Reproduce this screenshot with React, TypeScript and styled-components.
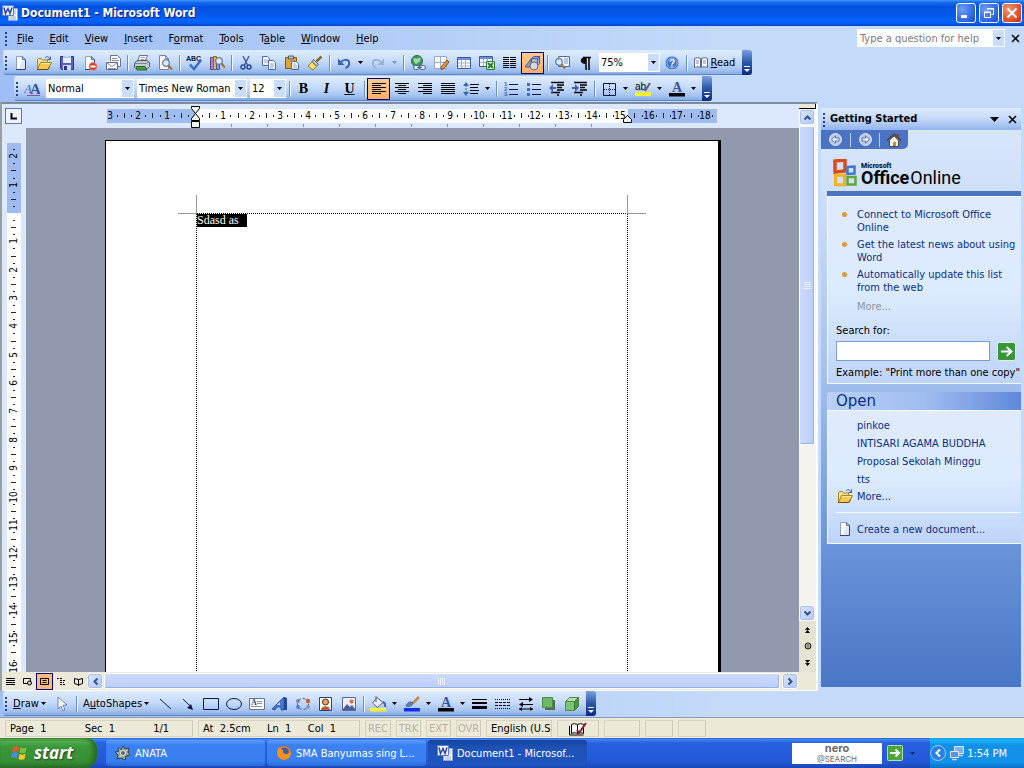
import React from 'react';
import styled, { createGlobalStyle, css } from 'styled-components';

const UI = '"DejaVu Sans Condensed", "Noto Sans", sans-serif';
const NAVY = '#0a2f86';

const Global = createGlobalStyle`
  * { box-sizing: border-box; }
  html, body { margin: 0; padding: 0; }
  body { font: 11px/13px ${UI}; color: #000; background: #c3daf9; }
  button, input, select { font: inherit; color: inherit; margin: 0; padding: 0; border: 0; background: none; border-radius: 0; }
  a { color: inherit; text-decoration: none; }
  svg { display: block; flex: none; }
`;

/* ---------- shell ---------- */
const Shell = styled.div`
  display: flex;
  flex-direction: column;
  height: 100vh;
  min-height: 480px;
  overflow: hidden;
  background: linear-gradient(90deg, #9ebef5 0, #c3daf9 70%);
`;
const TitleBar = styled.header`
  display: flex;
  align-items: center;
  flex: none;
  height: 26px;
  padding: 0 2px 0 2px;
  gap: 3px;
  background: linear-gradient(#3d95ff 0, #1668f0 10%, #0353e0 25%, #0458ea 60%, #0566ff 80%, #0558ee 92%, #0340c0 100%);
`;
const Title = styled.h1`
  flex: 1;
  margin: 0;
  font: bold 12px/16px ${UI};
  color: #fff;
  text-shadow: 1px 1px #0a1883;
`;
const WinButton = styled.button<{ $close?: boolean }>`
  display: flex;
  align-items: center;
  justify-content: center;
  width: 20px;
  height: 20px;
  border: 1px solid #fff;
  border-radius: 3px;
  background: ${p => p.$close
    ? 'radial-gradient(circle at 30% 30%, #f0936f, #dc4a22 70%, #b83012)'
    : 'radial-gradient(circle at 30% 30%, #6d9cf5, #2a62e4 70%, #1c48c0)'};
`;
const MenuBar = styled.nav`
  display: flex;
  align-items: center;
  flex: none;
  height: 24px;
  padding: 0 1px 0 3px;
`;
const MenuButton = styled.button`
  height: 20px;
  padding: 0 8px;
`;
const Spacer = styled.div` flex: 1; `;
const HelpBox = styled.div`
  display: flex;
  width: 148px;
  height: 18px;
  margin-right: 2px;
  background: #fff;
  input { flex: 1; min-width: 0; padding: 0 3px; outline: 0; }
  input::placeholder { color: #7b7b7b; opacity: 1; }
`;
const DropCap = styled.span`
  display: flex;
  align-items: center;
  justify-content: center;
  width: 11px;
  margin: 1px;
  background: #c9ddfa;
`;
const PlainButton = styled.button<{ $w?: number }>`
  display: flex;
  align-items: center;
  justify-content: center;
  flex: none;
  width: ${p => p.$w ?? 16}px;
  height: 16px;
`;

/* ---------- toolbars ---------- */
const BarRow = styled.div<{ $indent?: number }>`
  display: flex;
  flex: none;
  height: 26px;
  padding: 0 0 1px ${p => p.$indent ?? 3}px;
`;
const Bar = styled.div`
  display: flex;
  align-items: center;
  height: 25px;
  border-radius: 3px;
  background: linear-gradient(#dfecff 0, #c6dbfb 45%, #a3c2f1 80%, #86abe3 95%, #4a70ae 100%);
`;
const Grip = styled.span`
  flex: none;
  width: 6px;
  height: 15px;
  background: radial-gradient(circle, #27418c 1px, transparent 1px) 1px 0 / 4px 4px repeat-y;
`;
const ToolButton = styled.button<{ $on?: boolean; $w?: number }>`
  display: flex;
  align-items: center;
  justify-content: center;
  flex: none;
  gap: 2px;
  width: ${p => p.$w ?? 23}px;
  height: 22px;
  ${p => p.$on && css`border: 1px solid #000080; background: linear-gradient(#fecb93, #fdae66);`}
`;
const DropButton = styled(ToolButton)` width: 11px; `;
const Sep = styled.span`
  flex: none;
  width: 1px;
  height: 16px;
  margin: 0 2px 0 3px;
  background: #6a8ccb;
  box-shadow: 1px 0 #f1f9ff;
`;
const EndCap = styled.button`
  display: flex;
  align-items: flex-end;
  justify-content: center;
  width: 10px;
  height: 25px;
  margin-left: 3px;
  padding-bottom: 2px;
  border-radius: 0 3px 3px 0;
  background: linear-gradient(#7ba1e0, #2c56a8 50%, #0a2c80);
`;
const Combo = styled.label<{ $w: number }>`
  display: flex;
  flex: none;
  width: ${p => p.$w}px;
  height: 19px;
  margin-left: 3px;
  background: #fff;
  select { flex: 1; min-width: 0; padding: 0 2px; appearance: none; outline: 0; }
`;
const Glyph = styled.span<{ $kind: 'b' | 'i' | 'u' }>`
  font: bold 14px/16px "Liberation Serif", serif;
  ${p => p.$kind === 'i' && css`font-style: italic;`}
  ${p => p.$kind === 'u' && css`text-decoration: underline;`}
`;

/* ---------- work area ---------- */
const Work = styled.main`
  display: flex;
  flex: 1;
  min-height: 0;
`;
const DocFrame = styled.section`
  display: flex;
  flex-direction: column;
  flex: 1;
  min-width: 0;
  border-top: 2px solid #7d8aa0;
  border-left: 2px solid #9aa0a0;
  border-right: 2px solid #fff;
  background: #ece9d8;
`;
const DocTop = styled.div`
  display: flex;
  flex: 1;
  min-height: 0;
`;
const DocMain = styled.div`
  display: flex;
  flex-direction: column;
  flex: 1;
  min-width: 0;
`;
const RulerRow = styled.div`
  display: flex;
  flex: none;
  height: 24px;
  background: #dce8fd;
`;
const TabBox = styled.button`
  width: 17px;
  height: 16px;
  margin: 4px 3px 0 3px;
  display: flex;
  align-items: center;
  justify-content: center;
  flex: none;
  border: 1px solid #5a78b8;
  background: #eef4ff;
`;
const ClipBox = styled.div`
  flex: 1;
  min-width: 0;
  overflow: hidden;
`;
const CanvasRow = styled.div`
  display: flex;
  flex: 1;
  min-height: 0;
`;
const VRuler = styled.div`
  flex: none;
  width: 24px;
  overflow: hidden;
  background: #dce8fd;
`;
const Canvas = styled.div`
  flex: 1;
  min-width: 0;
  overflow: hidden;
  padding: 12px 0 0 79px;
  background: #9099ae;
`;
const Paper = styled.article`
  width: 616px;
  height: 866px;
  padding: 72px 90px 0 90px;
  border: 1px solid #000;
  border-width: 1px 3px 3px 1px;
  background: #fff;
`;
const TextArea = styled.div`
  position: relative;
  height: 720px;
  border: 1px dotted #000;
  &::before, &::after {
    content: '';
    position: absolute;
    top: -19px;
    width: 18px;
    height: 18px;
    border-bottom: 1px solid #9a9a9a;
  }
  &::before { left: -19px; border-right: 1px solid #9a9a9a; }
  &::after { right: -19px; border-left: 1px solid #9a9a9a; }
  p { margin: 0; font: 12px/13px "Liberation Serif", serif; }
  mark { display: inline-block; padding-right: 8px; background: #000; color: #fff; }
`;

/* ---------- scroll bars ---------- */
const VScroll = styled.div`
  display: flex;
  flex-direction: column;
  flex: none;
  width: 17px;
  background: #f4f3ee;
`;
const Splitter = styled.span`
  flex: none;
  height: 5px;
  border-bottom: 1px solid #000;
  border-right: 1px solid #000;
  background: #ece9d8;
`;
const ScrollButton = styled.button`
  display: flex;
  align-items: center;
  justify-content: center;
  flex: none;
  width: 16px;
  height: 16px;
  border: 1px solid #fff;
  border-radius: 3px;
  background: linear-gradient(135deg, #dbe6fe, #b3c8f8);
  box-shadow: inset 0 0 0 1px #a9bff0;
`;
const VThumb = styled.div`
  flex: 66 1 0;
  display: flex;
  align-items: center;
  justify-content: center;
  width: 16px;
  margin: 1px 0;
  border: 1px solid #fff;
  border-radius: 2px;
  background: linear-gradient(90deg, #cddafe, #bccdfb);
  box-shadow: inset -1px -1px #98b1e4;
`;
const VTrack = styled.div` flex: 33 1 0; `;
const BrowseBox = styled.div`
  display: flex;
  flex-direction: column;
  align-items: center;
  flex: none;
  padding: 1px 0 2px;
  background: #e6e3d3;
`;
const HScroll = styled.div`
  display: flex;
  align-items: center;
  flex: none;
  height: 19px;
  background: #ece9d8;
  border-bottom: 1px solid #fff;
`;
const ViewButton = styled.button<{ $on?: boolean }>`
  display: flex;
  align-items: center;
  justify-content: center;
  flex: none;
  width: 17px;
  height: 17px;
  ${p => p.$on && css`border: 1px solid #000080; background: #fdb97c;`}
`;
const HThumb = styled.div`
  flex: 1;
  display: flex;
  align-items: center;
  justify-content: center;
  height: 16px;
  margin: 0 2px 0 1px;
  border: 1px solid #fff;
  border-radius: 2px;
  background: linear-gradient(#cddafe, #bccdfb);
  box-shadow: inset -1px -1px #98b1e4;
`;

/* ---------- task pane ---------- */
const Pane = styled.aside`
  display: flex;
  flex-direction: column;
  flex: none;
  width: 200px;
  margin: 6px 3px 4px 3px;
  background: linear-gradient(#dbe8fb 0, #cfe0fa 14%, #a5c1ee 45%, #6691d8 78%, #4976c6 100%);
`;
const PaneHead = styled.div`
  display: flex;
  align-items: center;
  flex: none;
  height: 22px;
  background: linear-gradient(#dfebfe, #c3d8fa 50%, #94b4ec);
  h2 { flex: 1; margin: 0; font: bold 11px/14px ${UI}; }
`;
const PaneNav = styled.div`
  display: flex;
  align-items: center;
  flex: none;
  width: 87px;
  height: 19px;
  border-radius: 0 0 5px 0;
  background: #4a73c4;
`;
const NavButton = styled.button`
  display: flex;
  align-items: center;
  justify-content: center;
  width: 29px;
  height: 14px;
  & + & { border-left: 1px solid #b9cdf3; }
`;
const Brand = styled.div`
  display: flex;
  align-items: flex-end;
  flex: none;
  height: 42px;
  margin-left: 6px;
  padding: 0 0 4px 5px;
  gap: 4px;
`;
const BrandText = styled.div`
  font: 18px/18px Roboto, sans-serif;
  white-space: nowrap;
  small { display: block; font: bold 7px/6px Roboto, sans-serif; }
  b { margin-right: 1px; }
`;
const Rule = styled.div`
  flex: none;
  height: 5px;
  margin-left: 6px;
  background: #4a74c0;
`;
const Card = styled.div`
  flex: none;
  margin-left: 6px;
  border: solid #f4f9ff;
  border-width: 1px 0 1px 1px;
  background: linear-gradient(#dfeafc, #dcebfe 50%, #bed4f8);
`;
const TipList = styled.ul`
  list-style: none;
  margin: 0;
  padding: 11px 0 0 0;
  color: ${NAVY};
  li { display: flex; margin-bottom: 4px; }
  li::before { content: ''; flex: none; width: 5px; height: 5px; margin: 4px 10px 0 14px; border-radius: 3px; background: #e8943a; }
`;
const MoreMuted = styled.a`
  display: block;
  padding: 2px 0 11px 29px;
  color: #8f959e;
`;
const SearchForm = styled.form`
  padding: 0 5px 4px 8px;
  white-space: nowrap;
  label { display: block; margin-bottom: 4px; }
  div { display: flex; align-items: center; gap: 7px; margin-bottom: 5px; }
  input { flex: 1; min-width: 0; height: 20px; border: 1px solid #7b9fd6; background: #fff; padding: 0 3px; }
  button { height: 19px; width: 19px; }
`;
const OpenHead = styled.h3`
  flex: none;
  height: 18px;
  margin: 8px 0 0 6px;
  padding-left: 9px;
  font: 15px/19px "DejaVu Sans", sans-serif;
  color: ${NAVY};
  border-radius: 4px 0 0 0;
  background: linear-gradient(90deg, #b9d0f7, #a0bdf0 50%, #5f88da);
`;
const FileList = styled.ul`
  list-style: none;
  margin: 0;
  padding: 5px 0 0 0;
  color: ${NAVY};
  li { height: 18px; padding: 3px 0 0 29px; white-space: nowrap; }
`;
const PaneLink = styled.a`
  display: flex;
  align-items: center;
  height: 16px;
  padding-left: 9px;
  gap: 4px;
  color: ${NAVY};
`;
const FileBlock = styled.div`
  padding-bottom: 6px;
  hr { margin: 8px 0 8px 8px; border: 0; height: 1px; background: #f4f9ff; }
`;

/* ---------- status bar ---------- */
const Status = styled.footer`
  display: flex;
  align-items: center;
  flex: none;
  height: 21px;
  padding: 1px 0 0 5px;
  gap: 5px;
  border-top: 1px solid #8f9bb0;
  background: #ece9d8;
`;
const Cell = styled.div<{ $w: number; $dim?: boolean }>`
  display: flex;
  align-items: center;
  justify-content: space-between;
  flex: none;
  width: ${p => p.$w}px;
  height: 17px;
  padding: 0 ${p => (p.$dim ? 1 : 4)}px;
  border: 1px solid #d8d4c2;
  border-right-color: #cfcbb8;
  white-space: pre;
  overflow: hidden;
  ${p => p.$dim && css`color: #b5b2a3; justify-content: center;`}
`;

/* ---------- taskbar ---------- */
const TaskBar = styled.div`
  display: flex;
  align-items: center;
  flex: none;
  height: 30px;
  background: linear-gradient(#2f66d8 0, #3f86f2 6%, #2860df 16%, #2359d8 80%, #1c46b4 100%);
`;
const StartButton = styled.button`
  display: flex;
  align-items: center;
  align-self: stretch;
  gap: 5px;
  flex: none;
  width: 97px;
  margin-right: 9px;
  padding-left: 11px;
  border-radius: 0 10px 12px 0;
  background: linear-gradient(#5aa452 0, #53b04e 10%, #3a9639 30%, #378f35 80%, #2b6f29 100%);
  box-shadow: inset -4px 0 5px #276b26;
  font: italic bold 17px/20px "Open Sans", sans-serif;
  color: #fff;
  text-shadow: 1px 1px 2px #1c4a1a;
`;
const Task = styled.button<{ $on?: boolean }>`
  display: flex;
  align-items: center;
  flex: none;
  gap: 4px;
  width: 159px;
  height: 26px;
  margin-right: 2px;
  padding-left: 9px;
  border-radius: 3px;
  color: #fff;
  white-space: nowrap;
  background: ${p => (p.$on
    ? 'linear-gradient(#1742a0, #1e52b7 30%, #1f55be)'
    : 'linear-gradient(#5c9bfb 0, #3c81f3 20%, #3a7ff2 80%, #2e68d6)')};
`;
const Nero = styled.div`
  flex: none;
  width: 90px;
  height: 21px;
  margin-right: 5px;
  background: #fff;
  color: #6a6a6a;
  text-align: center;
  font: bold 11px/11px Inter, sans-serif;
  small { display: block; font: 8px/10px Inter, sans-serif; }
`;
const Tray = styled.div`
  display: flex;
  align-items: center;
  align-self: stretch;
  flex: none;
  width: 94px;
  padding-right: 17px;
  justify-content: space-between;
  color: #fff;
  background: linear-gradient(#1a9df0 0, #18b4f5 8%, #1290e8 25%, #1292ea 80%, #0e6ec8 100%);
`;

/* ---------- icons ---------- */
type Kids = { children?: React.ReactNode; w?: number; h?: number };
const Svg = ({ children, w = 16, h = 16 }: Kids) => (
  <svg width={w} height={h} viewBox={`0 0 ${w} ${h}`} fill="none" aria-hidden="true">{children}</svg>
);
const Down = ({ c = '#000' }: { c?: string }) => (
  <Svg w={5} h={3}><path d="M0 0h5L2.5 3z" fill={c} /></Svg>
);
const Sheet = () => (
  <g><path d="M3 1h6l4 4v10H3z" fill="#fff" /><path d="M9 6h3v8H6z" fill="#dce6f6" /><path d="M3.500 15V1.500H9" stroke="#8b9cc4" /><path d="M9.500 1.500l3 3v10H3" stroke="#34446e" /><path d="M9.500 1.500v3h3" fill="#b4c4e4" stroke="#5c6f9c" /></g>
);
const Lens = ({ x, y }: { x: number; y: number }) => (
  <g><circle cx={x} cy={y} r="3.300" fill="#d6ebfb" stroke="#6f7f9c" strokeWidth="1.300" /><path d={`M${x + 2.5} ${y + 2.5}l3.500 4`} stroke="#a8702c" strokeWidth="2" /></g>
);
const Rows = ({ rows, x = 2 }: { rows: [number, number][]; x?: number }) => (
  <>{rows.map(([o, l], i) => <path key={i} d={`M${x + o} ${2.5 + i * 2}h${l}`} stroke="#000" />)}</>
);

const NewDoc = () => <Svg><Sheet /></Svg>;
const Folder = () => (
  <Svg><path d="M1.500 14V4.500l1-1h3l1 1.500h5v3" fill="#f6e094" stroke="#a8842c" /><path d="M1.500 14.500l3-7h11l-3.500 7z" fill="#f8c84c" stroke="#a8842c" /><path d="M5 8.500h9" stroke="#fdeeb0" /><path d="M1 14.500h11l1.500-3" stroke="#6a4e14" /><path d="M9 3c1.500-2 4-1.500 5 1m.500-2.500V4.500h-3" stroke="#4a5a80" /></Svg>
);
const Disk = () => (
  <Svg><path d="M1.500 1.500h13v13h-12l-1-1z" fill="#5661c0" stroke="#2b3488" /><path d="M4 1h8v7H4z" fill="#e8edfc" /><path d="M4 1h8v2H4z" fill="#b9c6ee" /><path d="M4 10h8v5H4z" fill="#d4daf0" /><path d="M5 11h3v4H5z" fill="#2b3488" /></Svg>
);
const Permission = () => <Svg><Sheet /><circle cx="11" cy="11.500" r="4" fill="#d9432a" stroke="#f0a090" strokeWidth=".5" /><path d="M8.500 11.500h5" stroke="#fff" strokeWidth="2" /></Svg>;
const Mail = () => (
  <Svg><path d="M5.500 .5h7l3 3v8h-10z" fill="#fff" stroke="#6a7488" /><path d="M7 3.500h5M7 5.500h7" stroke="#8a94a8" /><path d="M1 6h9l3 2v7H1z" fill="#eef1f7" /><path d="M1.500 7.500h11v7h-11z" fill="#fafbfe" stroke="#5f6a82" /><path d="M2 8l5 3.500L12 8M3 13.500h8" stroke="#8a94a8" /></Svg>
);
const Printer = () => (
  <Svg><path d="M5.500 .5h8l-2.500 6H3.500z" fill="#fff" stroke="#66708a" /><path d="M7 2.500h4M6.500 4.500h4" stroke="#9aa4b8" /><path d="M.5 8.500l2.500-3h10l2.500 2v4l-2 2H1.500l-1-1z" fill="#c4cad2" stroke="#4f5a6a" /><path d="M1 8.500h11.500l2.500-2" stroke="#7d8894" /><path d="M2 11.500h9l2 3.500H3z" fill="#3f9c40" stroke="#2a6a30" /></Svg>
);
const Preview = () => <Svg><path d="M2.500 .5h6l3 3v11h-9z" fill="#fff" stroke="#7486ae" /><path d="M8.500 .5v3h3" stroke="#7486ae" /><Lens x={9} y={8} /></Svg>;
const Spell = () => (
  <Svg w={18}><text x="1" y="6" fontSize="7" fontWeight="bold" fontFamily="Liberation Sans" fill="#101840">ABC</text><path d="M5 9.500l4 4.500L16 5" stroke="#3a6cc8" strokeWidth="2.500" /></Svg>
);
const Research = () => (
  <Svg><path d="M1.500 2.500h3v12h-3z" fill="#a884c8" stroke="#5a4488" /><path d="M4.500 1.500h3v13h-3z" fill="#e8b05c" stroke="#8a6428" /><path d="M7.500 3.500h3v11h-3z" fill="#7a9ce0" stroke="#44609c" /><Lens x={10} y={6} /></Svg>
);
const Cut = () => (
  <Svg><path d="M5 1l4.500 9M11 1L6.500 10" stroke="#4a5f94" strokeWidth="1.500" /><circle cx="5" cy="12" r="2" stroke="#2f4a98" strokeWidth="1.500" /><circle cx="11" cy="12" r="2" stroke="#2f4a98" strokeWidth="1.500" /></Svg>
);
const Copy = () => (
  <Svg><path d="M1.500 1.500h5l2 2v7h-7z" fill="#fff" stroke="#4f68a4" /><path d="M3 5h4M3 7h4" stroke="#88a0d4" /><path d="M7.500 5.500h5l2 2v7h-7z" fill="#fff" stroke="#4f68a4" /><path d="M9 9h4M9 11h4M9 13h3" stroke="#88a0d4" /></Svg>
);
const Paste = () => (
  <Svg><path d="M1.500 2.500h11v11h-11z" fill="#d9a43a" stroke="#7c5a1a" /><path d="M4.500 1h5v3h-5z" fill="#b9bdc8" stroke="#5a5f70" /><path d="M7.500 6.500h5l2 2v6h-7z" fill="#fff" stroke="#4f68a4" /><path d="M9 9h3M9 11h4M9 13h4" stroke="#88a0d4" /></Svg>
);
const Brush = () => (
  <Svg><path d="M14.500 1.500l-5 5" stroke="#8a6a2c" strokeWidth="2.500" /><path d="M6.500 4.500l5 5-2 1.500-4.500-4.500z" fill="#c8ccd8" stroke="#5a607a" /><path d="M5 7l4.500 4.500L6 15 1 11z" fill="#fbe06a" stroke="#9a7a24" /></Svg>
);
const Undo = () => (
  <Svg><path d="M4 8c3-4 8-4 9-1 .8 3-1 5-3.500 6" stroke="#3a62b4" strokeWidth="2" /><path d="M2 3.500v6.500h6.500z" fill="#3a62b4" /></Svg>
);
const Redo = () => (
  <Svg><path d="M12 8c-3-4-8-4-9-1-.8 3 1 5 3.500 6" stroke="#9db1d6" strokeWidth="2" /><path d="M14 3.500v6.500H7.500z" fill="#9db1d6" /></Svg>
);
const Link = () => (
  <Svg><circle cx="7" cy="6" r="5.500" fill="#3f9a5a" stroke="#2a6a50" /><path d="M3 4c2-2 4 1 6-1s2 3 0 4-3 3-4 1z" fill="#9fdcaa" /><rect x="3.500" y="10.500" width="6" height="4" rx="2" fill="#e4ebf8" stroke="#4a5f94" /><rect x="9.500" y="10.500" width="6" height="4" rx="2" fill="#e4ebf8" stroke="#4a5f94" /><path d="M7 12.500h5" stroke="#4a5f94" /></Svg>
);
const TablePen = () => (
  <Svg><path d="M1.500 1.500h12v12h-12z" fill="#fff" stroke="#9aa8c8" /><path d="M7.500 2v11M2 7.500h11" stroke="#9aa8c8" /><path d="M14 5l-5.500 6.500L8 14.500l3-1L16 7z" fill="#e09a3c" stroke="#7a4a1c" /></Svg>
);
const Table = () => (
  <Svg><path d="M1.500 2.500h13v11h-13z" fill="#fff" stroke="#3f5a9a" /><path d="M2 3h12v2H2z" fill="#6a8fd8" /><path d="M5.500 5v8M9.500 5v8M2 8h12M2 11h12" stroke="#9db0dc" /></Svg>
);
const Excel = () => (
  <Svg><path d="M.5 1.500h13v10H.5z" fill="#fff" stroke="#3f5a9a" /><path d="M1 2h12v2H1z" fill="#6a8fd8" /><path d="M4.500 4v7M8.500 4v7M1 7.500h12" stroke="#9db0dc" /><path d="M7.500 6.500h8v8h-8z" fill="#e6f4e4" stroke="#2c7a34" /><path d="M9 8l5 5m0-5l-5 5" stroke="#2c7a34" strokeWidth="2" /></Svg>
);
const lines = (n: number): [number, number][] => Array.from({ length: 6 }, () => [0, n]);
const Columns = () => <Svg><Rows x={1} rows={lines(6)} /><Rows x={8} rows={lines(6)} /></Svg>;
const Drawing = () => (
  <Svg><path d="M0 12l6-8v8z" fill="#8d98b4" stroke="#59647c" /><path d="M6.500 3.500l2-2h6v7l-2 2h-6z" fill="#a4b6dc" stroke="#4a5a84" /><path d="M6.500 3.500h6v7m0-7l2-2" stroke="#4a5a84" /><circle cx="9" cy="11" r="4" fill="#d4d8de" stroke="#6a7282" /></Svg>
);
const DocMap = () => (
  <Svg><path d="M4.500 1.500h11v10h-11z" fill="#f4f8ff" stroke="#4f68a4" /><path d="M10 4h4M10 6h4M10 8h4" stroke="#6a8fd8" /><Lens x={5} y={7} /></Svg>
);
const Help = () => (
  <Svg><circle cx="8" cy="8" r="7" fill="#3f74cc" stroke="#c2d4f2" /><circle cx="8" cy="8" r="5" stroke="#8fb2ec" /><text x="8" y="12" textAnchor="middle" fontSize="10" fontWeight="bold" fontFamily="Liberation Sans" fill="#fff">?</text></Svg>
);
const Book = () => (
  <Svg><path d="M1.500 3.500c2-1 4-1 6 0v9c-2-1-4-1-6 0zM14.500 3.500c-2-1-4-1-6 0v9c2-1 4-1 6 0z" fill="#fff" stroke="#5a6a94" /><path d="M3 6h3M3 8h3M10 6h3M10 8h3" stroke="#7d8cb4" /></Svg>
);
const Styles = () => (
  <Svg><text x="0" y="12" fontSize="13" fontStyle="italic" fontWeight="bold" fontFamily="Liberation Serif" fill="#5a80d0">A</text><text x="6" y="13" fontSize="15" fontWeight="bold" fontFamily="Liberation Serif" fill="#34569c">A</text><path d="M3 14.500h13" stroke="#8a4ca8" /></Svg>
);
const AlignL = () => <Svg><Rows rows={[[0, 14], [0, 9], [0, 14], [0, 9], [0, 14], [0, 9]]} x={1} /></Svg>;
const AlignC = () => <Svg><Rows rows={[[0, 14], [3, 8], [0, 14], [3, 8], [0, 14], [3, 8]]} x={1} /></Svg>;
const AlignR = () => <Svg><Rows rows={[[0, 14], [5, 9], [0, 14], [5, 9], [0, 14], [5, 9]]} x={1} /></Svg>;
const AlignJ = () => <Svg><Rows rows={lines(14)} x={1} /></Svg>;
const Spacing = () => (
  <Svg><path d="M3 1l3 4H0zM3 15l3-4H0z" fill="#3f62b8" /><path d="M3 4v8" stroke="#3f62b8" strokeDasharray="2 1" /><path d="M7 3.500h9M7 6.500h8M7 9.500h9M7 12.500h8" stroke="#000" /></Svg>
);
const Numbers = () => (
  <Svg>{['1', '2', '3'].map((n, i) => <text key={n} x="1" y={5 + i * 5} fontSize="6" fontFamily="Liberation Sans" fontWeight="bold" fill="#3f62b8">{n}</text>)}<path d="M6 3.500h9M6 8.500h9M6 13.500h9" stroke="#10184a" /></Svg>
);
const Bullets = () => <Svg><path d="M1 2h3v3H1zM1 7h3v3H1zM1 12h3v3H1z" fill="#4a6cb8" /><path d="M6 3.500h9M6 8.500h9M6 13.500h9" stroke="#10184a" /></Svg>;
const indentRows = 'M2 1.500h13M8 4h7M8 6.500h5M8 9h7M2 11.500h9M8 14h2';
const Outdent = () => <Svg><path d={indentRows} stroke="#000" strokeWidth="1.500" /><path d="M4 3v3h3v2H4v3L0 7z" fill="#3f62b8" /></Svg>;
const Indent = () => <Svg><path d={indentRows} stroke="#000" strokeWidth="1.500" /><path d="M3 3v3H0v2h3v3l4-4z" fill="#3f62b8" /></Svg>;
const Borders = () => <Svg><path d="M2.500 2.500h12v12h-12z" stroke="#10184a" /><path d="M8.500 3v11M3 8.500h11" stroke="#10184a" strokeDasharray="1 1" /></Svg>;
const Highlight = () => (
  <Svg><path d="M0 11h16v4H0z" fill="#f8f032" /><text x="0" y="9" fontSize="10" fontFamily="Liberation Sans" fill="#000">ab</text><path d="M15 2l-5 8" stroke="#5a6478" strokeWidth="2" /></Svg>
);
const FontColor = () => (
  <Svg><text x="8" y="11" textAnchor="middle" fontSize="14" fontWeight="bold" fontFamily="Liberation Serif" fill="#34569c">A</text><path d="M0 12h16v3.500H0z" fill="#000" /></Svg>
);
const Cursor = () => <Svg><path d="M4 1v12l3-3 2 5 2-1-2-5h4z" fill="#fff" stroke="#6a84b8" /></Svg>;
const WordArt = () => <Svg><path d="M0 13L12 1v13H9v-3L5 11l-2 3z" fill="#4a78d8" stroke="#2e54ae" /><path d="M8 6v3H5z" fill="#cfe0fb" /><path d="M12 1l3 1v12h-3z" fill="#26489a" /></Svg>;
const TextBox = () => (
  <Svg><path d="M.5 2.500h15v11H.5z" fill="#fff" stroke="#6a7488" /><text x="2" y="9" fontSize="8" fontWeight="bold" fontFamily="Liberation Serif" fill="#26428c">A</text><path d="M8 5.500h5M8 7.500h5M2 10.500h11" stroke="#8a94a8" /></Svg>
);
const Diagram = () => (
  <Svg><circle cx="8" cy="8" r="5.500" stroke="#4a5a84" strokeDasharray="3 2" /><circle cx="3" cy="5" r="2" fill="#7a86a8" /><circle cx="13" cy="5" r="2.200" fill="#c8603a" /><circle cx="3" cy="11" r="2" fill="#5a7cc8" /><circle cx="13" cy="11" r="2" fill="#8a94b8" /></Svg>
);
const ClipArt = () => (
  <Svg><path d="M1.500 1.500h12v13h-12z" fill="#fff" stroke="#26428c" /><circle cx="7.500" cy="6" r="3" fill="#e8a860" stroke="#5a2a1c" /><path d="M3 14c0-5 9-5 9 0z" fill="#b8602c" /></Svg>
);
const Picture = () => (
  <Svg><path d="M1.500 1.500h13v13h-13z" fill="#e8f0fc" stroke="#5a6a94" /><path d="M2 13l4-5 3 3 2-2 3 4v1H2z" fill="#4a5f9a" /><circle cx="10.500" cy="5.500" r="2" fill="#e0683a" /></Svg>
);
const Fill = () => (
  <Svg><path d="M0 12h16v3.500H0z" fill="#f8f032" /><path d="M7 1.500l6 5-5.500 5L2.500 7z" fill="#e6ebf4" stroke="#5a6478" /><path d="M6 0v6" stroke="#5a6478" /><path d="M13 6c2 1 2.500 3 2 5" stroke="#3f62b8" strokeWidth="2" /></Svg>
);
const LineColor = () => (
  <Svg><path d="M0 12h16v3.500H0z" fill="#1030e8" /><path d="M15 1L9 7" stroke="#c98a34" strokeWidth="2.500" /><path d="M2 10c2-4 4-5 7-3-1 3-4 4-7 3z" fill="#6a84b8" stroke="#3f5a9a" /></Svg>
);
const WordMark = () => (
  <Svg><path d="M6.500 3.500h9v12h-9z" fill="#fff" stroke="#8aa4dc" /><path d="M11 6h3M11 8h3M8 12h6M8 14h6" stroke="#8aa4dc" /><path d="M.5.500h11v10H.5z" fill="#eef3ff" stroke="#5c7ccb" /><path d="M2 2.500l1.500 6L6 3.500l2 5L10 2.500" stroke="#2a4aa4" strokeWidth="1.500" /></Svg>
);
const Chevron = ({ r = 0 }: { r?: number }) => (
  <Svg w={9} h={9}><path d="M1.500 6.500l3-3 3 3" stroke="#35528c" strokeWidth="2" transform={`rotate(${r} 4.500 4.500)`} /></Svg>
);
const NavArrow = ({ flip }: { flip?: boolean }) => (
  <Svg w={13} h={13}><g transform={flip ? 'matrix(-1 0 0 1 13 0)' : undefined}><circle cx="6.500" cy="6.500" r="6" fill="#b9c8e4" stroke="#dde7f8" /><path d="M2.500 6.500l4-3.500v2h3.500v3H6.500v2z" fill="#eef4ff" stroke="#5a74ac" /></g></Svg>
);
const Home = () => (
  <Svg><path d="M3.500 8v6.500h9V8L8 4z" fill="#f8f0d8" stroke="#4a4a4a" /><path d="M1 8.500L8 2l7 6.500" stroke="#4a4434" strokeWidth="1.500" /><path d="M7 10h3v4H7z" fill="#c98a34" /><path d="M11.500 2v3" stroke="#a03a1c" strokeWidth="2" /></Svg>
);
const OfficeMark = () => (
  <Svg w={25} h={28}>
    <path d="M3 2l10-1v11l-10 1z" stroke="#dc4a1c" strokeWidth="3.500" />
    <path d="M15.500 8l7-.5v7l-7 .5z" stroke="#3f78cc" strokeWidth="2.500" />
    <path d="M3.500 16.500l9-.5v10l-9-.5z" stroke="#f0b422" strokeWidth="3" />
    <path d="M15.500 18h8v7.500h-8z" stroke="#62a838" strokeWidth="2.500" />
  </Svg>
);
const Go = () => (
  <Svg w={19} h={19}><rect x=".5" y=".5" width="18" height="18" rx="2" fill="#369638" stroke="#dff0dc" /><path d="M4 9.500h10M9.500 5l5 4.500-5 4.500" stroke="#fff" strokeWidth="2" /></Svg>
);
const Flag = () => (
  <Svg w={18} h={18}><path d="M2 4c2-2 4-2 6-1L7 8C5 7 3 7 1 8z" fill="#e8542c" /><path d="M9.500 3.500c2 1 4 1 6-.5l-1 5.500c-2 1-4 1-6 0z" fill="#7cc142" /><path d="M1 9.500c2-1.500 4-1.500 6-.5l-1 5c-2-1-4-1-6 0z" fill="#4a8cec" /><path d="M8.500 10c2 1 4 1 6-.5l-1 5.500c-2 1-4 1-6 0z" fill="#fbc82c" /></Svg>
);
const Gear = () => (
  <Svg><path d="M3 3l3 2 2-4 2 3 4-1-1 4 2 3-4 1-1 4-4-2-4 1 1-4-3-3 4-1z" fill="#a4a894" stroke="#33424a" /><path d="M4 4l3 3M12 5L9 8M5 12l2-3" stroke="#e4e8d8" /><circle cx="8" cy="8" r="2.500" fill="#4a6a8c" stroke="#e0e4d4" /></Svg>
);
const Fox = () => (
  <Svg><circle cx="8" cy="8" r="7" fill="#e8741c" /><circle cx="8.500" cy="7" r="4.200" fill="#3a5cac" /><path d="M1.500 5c1-2 2-3 3-3 0 2 1 3 3 3-1 2 0 4 3 4 2 0 3-1 4-3 1 5-2 8.500-6.500 8.500S0 11 1.500 5z" fill="#f0921c" /></Svg>
);
const Network = () => (
  <Svg><path d="M5.500 1.500h9v7h-9z" fill="#7cb4f4" stroke="#dfe9fb" /><path d="M1.500 6.500h8v6h-8z" fill="#5a94e4" stroke="#dfe9fb" /><path d="M3 14.500h5M9 10.500h5" stroke="#c8d4e8" strokeWidth="1.500" /></Svg>
);

/* ---------- rulers ---------- */
const CM = 28.35;
const Marks = ({ from, to, at, draw }: { from: number; to: number; at: number; draw: (pos: number, kind: number, n: number) => React.ReactNode }) => {
  const out: React.ReactNode[] = [];
  for (let q = from; q <= to; q++) {
    const kind = ((q % 4) + 4) % 4;
    if (q !== 0) out.push(<React.Fragment key={q}>{draw(Math.round(at + (q * CM) / 4), kind, Math.abs(q / 4))}</React.Fragment>);
  }
  return <>{out}</>;
};
const HorizontalRuler = () => (
  <svg width="700" height="24" viewBox="0 0 700 24" fontFamily="DejaVu Sans Condensed" fontSize="10" aria-hidden="true">
    <path d="M82 5h88v14H82zM603 5h89v14h-89z" fill="#9fbcf0" />
    <path d="M171 5h432v14H171z" fill="#fff" />
    <Marks from={-12} to={73} at={170} draw={(x, kind, n) => kind === 0
      ? <text x={x} y="15" textAnchor="middle">{n}</text>
      : kind === 2 ? <path d={`M${x} 9h1v5h-1z`} fill="#223" /> : <path d={`M${x} 11h1v2h-1z`} fill="#223" />} />
    {Array.from({ length: 11 }, (_, i) => <path key={i} d={`M${206 + i * 36} 20h1v3h-1z`} fill="#8a94a8" />)}
    <path d="M166.500 2.500h8v2l-4 5-4-5zM166.500 16.500v-2l4-5 4 5v2zM166.500 17.500h8v6h-8zM598.500 18.500v-3l4-4 4 4v3z" fill="#f4f4ee" stroke="#000" />
  </svg>
);
const VerticalRuler = () => (
  <svg width="24" height="560" viewBox="0 0 24 560" fontFamily="DejaVu Sans Condensed" fontSize="10" aria-hidden="true">
    <path d="M5 15h14v70H5z" fill="#9fbcf0" />
    <path d="M5 85h14v475H5z" fill="#fff" />
    <Marks from={-9} to={66} at={85} draw={(y, kind, n) => kind === 0
      ? <text transform={`translate(15 ${y}) rotate(-90)`} textAnchor="middle">{n}</text>
      : kind === 2 ? <path d={`M9 ${y}h5v1H9z`} fill="#223" /> : <path d={`M11 ${y}h2v1h-2z`} fill="#223" />} />
  </svg>
);

/* ---------- composition ---------- */
const Key = ({ t, i = 0 }: { t: string; i?: number }) => <span>{t.slice(0, i)}<u>{t[i]}</u>{t.slice(i + 1)}</span>;
const T = ({ name, children, on }: { name: string; children: React.ReactNode; on?: boolean }) => (
  <ToolButton aria-label={name} $on={on}>{children}</ToolButton>
);
const D = ({ name, c }: { name: string; c?: string }) => <DropButton aria-label={name}><Down c={c} /></DropButton>;
const Pick = ({ name, w, value }: { name: string; w: number; value: string }) => (
  <Combo $w={w}><select aria-label={name} defaultValue={value}><option>{value}</option></select><DropCap><Down /></DropCap></Combo>
);
const Cap = () => <EndCap aria-label="Toolbar options"><Svg w={7} h={8}><path d="M0 1.500h6" stroke="#fff" /><path d="M0 4h6L3 7z" fill="#fff" /></Svg></EndCap>;

const menus: [string, number][] = [['File', 0], ['Edit', 0], ['View', 0], ['Insert', 0], ['Format', 1], ['Tools', 0], ['Table', 1], ['Window', 0], ['Help', 0]];
const tips = ['Connect to Microsoft Office Online', 'Get the latest news about using Word', 'Automatically update this list from the web'];
const recent = ['pinkoe', 'INTISARI AGAMA BUDDHA', 'Proposal Sekolah Minggu', 'tts'];

export default function App() {
  return (
    <Shell>
      <Global />
      <TitleBar>
        <WordMark />
        <Title>Document1 - Microsoft Word</Title>
        <WinButton aria-label="Minimize"><Svg w={12} h={12}><path d="M1 9.500h6" stroke="#fff" strokeWidth="3" /></Svg></WinButton>
        <WinButton aria-label="Restore"><Svg w={12} h={12}><path d="M4.500 3.500v-2h6v6h-2M1.500 5.500h6v5h-6zM4 2h7M1 5h7" stroke="#fff" /></Svg></WinButton>
        <WinButton aria-label="Close" $close><Svg w={12} h={12}><path d="M1.500 1.500l9 9m0-9l-9 9" stroke="#fff" strokeWidth="2" /></Svg></WinButton>
      </TitleBar>
      <MenuBar>
        <Grip />
        {menus.map(([t, i]) => <MenuButton key={t}><Key t={t} i={i} /></MenuButton>)}
        <Spacer />
        <HelpBox><input aria-label="Help question" placeholder="Type a question for help" /><DropCap><Down /></DropCap></HelpBox>
        <PlainButton aria-label="Close document"><Svg w={9} h={9}><path d="M1 1l7 7m0-7L1 8" stroke="#000" strokeWidth="1.500" /></Svg></PlainButton>
      </MenuBar>

      <BarRow>
        <Bar>
          <Grip />
          <T name="New"><NewDoc /></T><T name="Open"><Folder /></T><T name="Save"><Disk /></T><T name="Permission"><Permission /></T><T name="E-mail"><Mail /></T>
          <Sep />
          <T name="Print"><Printer /></T><T name="Print preview"><Preview /></T>
          <Sep />
          <T name="Spelling"><Spell /></T><T name="Research"><Research /></T>
          <Sep />
          <T name="Cut"><Cut /></T><T name="Copy"><Copy /></T><T name="Paste"><Paste /></T><T name="Format painter"><Brush /></T>
          <Sep />
          <T name="Undo"><Undo /></T><D name="Undo list" /><T name="Redo"><Redo /></T><D name="Redo list" c="#7d93c4" />
          <Sep />
          <T name="Hyperlink"><Link /></T><T name="Tables and borders"><TablePen /></T><T name="Insert table"><Table /></T><T name="Insert worksheet"><Excel /></T><T name="Columns"><Columns /></T><T name="Drawing" on><Drawing /></T>
          <Sep />
          <T name="Document map"><DocMap /></T>
          <T name="Show marks"><Svg><path d="M6 2.500h8M9 3v12M12 3v12" stroke="#000" strokeWidth="1.500" /><path d="M9 2v7C2 9 2 2 9 2z" fill="#000" /></Svg></T>
          <Pick name="Zoom" w={61} value="75%" />
          <T name="Help"><Help /></T>
          <Sep />
          <ToolButton $w={50}><Book /><Key t="Read" /></ToolButton>
          <Cap />
        </Bar>
      </BarRow>
      <BarRow $indent={14}>
        <Bar>
          <Grip />
          <T name="Styles"><Styles /></T>
          <Pick name="Style" w={88} value="Normal" />
          <Pick name="Font" w={110} value="Times New Roman" />
          <Pick name="Font size" w={36} value="12" />
          <Sep />
          <ToolButton><Glyph $kind="b">B</Glyph></ToolButton><ToolButton><Glyph $kind="i">I</Glyph></ToolButton><ToolButton><Glyph $kind="u">U</Glyph></ToolButton>
          <Sep />
          <T name="Align left" on><AlignL /></T><T name="Center"><AlignC /></T><T name="Align right"><AlignR /></T><T name="Justify"><AlignJ /></T>
          <T name="Line spacing"><Spacing /></T><D name="Line spacing list" />
          <Sep />
          <T name="Numbering"><Numbers /></T><T name="Bullets"><Bullets /></T><T name="Decrease indent"><Outdent /></T><T name="Increase indent"><Indent /></T>
          <Sep />
          <T name="Borders"><Borders /></T><D name="Border list" />
          <T name="Highlight"><Highlight /></T><D name="Highlight list" />
          <T name="Font color"><FontColor /></T><D name="Font color list" />
          <Cap />
        </Bar>
      </BarRow>

      <Work>
        <DocFrame>
          <DocTop>
            <DocMain>
              <RulerRow>
                <TabBox aria-label="Tab type"><Svg w={7} h={7}><path d="M1.500 0v5.500H7" stroke="#000" strokeWidth="2" /></Svg></TabBox>
                <ClipBox><HorizontalRuler /></ClipBox>
              </RulerRow>
              <CanvasRow>
                <VRuler><VerticalRuler /></VRuler>
                <Canvas>
                  <Paper><TextArea><p><mark>Sdasd as</mark></p></TextArea></Paper>
                </Canvas>
              </CanvasRow>
            </DocMain>
            <VScroll>
              <Splitter />
              <ScrollButton aria-label="Scroll up"><Chevron /></ScrollButton>
              <VThumb><Svg w={7} h={8}><path d="M0 .5h7M0 2.500h7M0 4.500h7M0 6.500h7" stroke="#eef4fe" /></Svg></VThumb>
              <VTrack />
              <ScrollButton aria-label="Scroll down"><Chevron r={180} /></ScrollButton>
              <BrowseBox>
                <PlainButton aria-label="Previous page"><Svg w={7} h={7}><path d="M3.500 0L6 3H1zM3.500 3L6 6H1z" fill="#000" /></Svg></PlainButton>
                <PlainButton aria-label="Browse object"><Svg w={8} h={8}><circle cx="4" cy="4" r="3" fill="#9a9a90" stroke="#222" /></Svg></PlainButton>
                <PlainButton aria-label="Next page"><Svg w={7} h={7}><path d="M1 1h5L3.500 4zM1 4h5L3.500 7z" fill="#000" /></Svg></PlainButton>
              </BrowseBox>
            </VScroll>
          </DocTop>
          <HScroll>
            <ViewButton aria-label="Normal view"><Svg w={9} h={9}><path d="M0 1.500h9M0 3.500h9M0 5.500h9M0 7.500h9" stroke="#000" /></Svg></ViewButton>
            <ViewButton aria-label="Web layout"><Svg w={9} h={9}><path d="M.5 1.500h7v5h-7z" stroke="#000" /><circle cx="6.500" cy="6" r="2" fill="#ccc" stroke="#000" /></Svg></ViewButton>
            <ViewButton aria-label="Print layout" $on><Svg w={9} h={9}><path d="M.5 1.500h8v6h-8zM2.500 3.500h4M2.500 5.500h4" stroke="#000" /></Svg></ViewButton>
            <ViewButton aria-label="Outline view"><Svg w={9} h={9}><path d="M0 1.500h6M3 3.500h6M3 5.500h4M3 7.500h6" stroke="#000" strokeDasharray="2 1" /></Svg></ViewButton>
            <ViewButton aria-label="Reading layout"><Svg w={9} h={9}><path d="M.5 1.500l4 1 4-1v5l-4 1.500-4-1.500zM4.500 2v7" stroke="#000" /></Svg></ViewButton>
            <ScrollButton aria-label="Scroll left"><Chevron r={-90} /></ScrollButton>
            <HThumb><Svg w={8} h={7}><path d="M.5 0v7M2.500 0v7M4.500 0v7M6.500 0v7" stroke="#eef4fe" /></Svg></HThumb>
            <ScrollButton aria-label="Scroll right"><Chevron r={90} /></ScrollButton>
            <PlainButton as="span" $w={18} />
          </HScroll>
        </DocFrame>

        <Pane>
          <PaneHead>
            <Grip />
            <PlainButton as="span" $w={3} />
            <h2>Getting Started</h2>
            <PlainButton aria-label="Other task panes" $w={18}><Svg w={9} h={5}><path d="M0 0h9L4.500 5z" fill="#000" /></Svg></PlainButton>
            <PlainButton aria-label="Close pane" $w={18}><Svg w={9} h={9}><path d="M1 1l7 7m0-7L1 8" stroke="#000" strokeWidth="1.500" /></Svg></PlainButton>
          </PaneHead>
          <PaneNav>
            <NavButton aria-label="Back"><NavArrow /></NavButton>
            <NavButton aria-label="Forward"><NavArrow flip /></NavButton>
            <NavButton aria-label="Home"><Home /></NavButton>
          </PaneNav>
          <Brand>
            <OfficeMark />
            <BrandText><small>Microsoft</small><b>Office</b>Online</BrandText>
          </Brand>
          <Rule />
          <Card>
            <TipList>{tips.map(t => <li key={t}><a href="#tip">{t}</a></li>)}</TipList>
            <MoreMuted href="#more">More...</MoreMuted>
            <SearchForm onSubmit={e => e.preventDefault()}>
              <label htmlFor="pane-search">Search for:</label>
              <div><input id="pane-search" /><button aria-label="Search"><Go /></button></div>
              Example: "Print more than one copy"
            </SearchForm>
          </Card>
          <OpenHead>Open</OpenHead>
          <Card>
            <FileBlock>
              <FileList>{recent.map(t => <li key={t}><a href="#file">{t}</a></li>)}</FileList>
              <PaneLink href="#open"><Folder />More...</PaneLink>
              <hr />
              <PaneLink href="#new"><NewDoc />Create a new document...</PaneLink>
            </FileBlock>
          </Card>
        </Pane>
      </Work>

      <BarRow>
        <Bar>
          <Grip />
          <ToolButton $w={41}><Key t="Draw" /><Down /></ToolButton>
          <T name="Select objects"><Cursor /></T>
          <Sep />
          <ToolButton $w={74}><Key t="AutoShapes" i={1} /><Down /></ToolButton>
          <T name="Line"><Svg><path d="M3 3l11 10" stroke="#10184a" /></Svg></T>
          <T name="Arrow"><Svg><path d="M3 3l8 8" stroke="#10184a" /><path d="M13 14l-6-2 4-4z" fill="#10184a" /></Svg></T>
          <T name="Rectangle"><Svg><path d="M.5 2.500h15v11H.5z" stroke="#10184a" /></Svg></T>
          <T name="Oval"><Svg><ellipse cx="8" cy="8" rx="7.500" ry="5.500" stroke="#10184a" /></Svg></T>
          <T name="Text box"><TextBox /></T><T name="WordArt"><WordArt /></T><T name="Diagram"><Diagram /></T><T name="Clip art"><ClipArt /></T><T name="Picture"><Picture /></T>
          <Sep />
          <T name="Fill color"><Fill /></T><D name="Fill list" />
          <T name="Line color"><LineColor /></T><D name="Line color list" />
          <T name="Font color"><FontColor /></T><D name="Font color list" />
          <T name="Line style"><Svg><path d="M0 3.500h15" stroke="#000" /><path d="M0 7h15" stroke="#000" strokeWidth="2" /><path d="M0 11.500h15" stroke="#000" strokeWidth="3" /></Svg></T>
          <T name="Dash style"><Svg><path d="M0 3.500h15M0 12.500h15" stroke="#000" strokeDasharray="1 1" /><path d="M0 6.500h15M0 9.500h15" stroke="#000" strokeDasharray="3 1" /></Svg></T>
          <T name="Arrow style"><Svg><path d="M1 3.500h12M3 8.500h12M1 13h14" stroke="#000" /><path d="M15 3.500L11 1v5zM1 8.500L5 6v5zM1 13l3-2v4zM15 13l-3-2v4z" fill="#000" /></Svg></T>
          <T name="Shadow style"><Svg><path d="M4 4h10v10H4z" fill="#5a6a5a" /><path d="M1.500 1.500h10v10h-10z" fill="#6cb864" stroke="#4a8a48" /></Svg></T>
          <T name="3-D style"><Svg><path d="M1.500 5.500h9v9h-9z" fill="#7cc474" stroke="#4a8a48" /><path d="M1.500 5.500l4-4h9l-4 4z" fill="#b4e0ac" stroke="#4a8a48" /><path d="M10.500 5.500l4-4v9l-4 4z" fill="#4a9448" stroke="#3f8040" /></Svg></T>
          <Cap />
        </Bar>
      </BarRow>

      <Status>
        <Cell $w={188}><span>Page  1</span><span>Sec  1</span><span>1/1      </span></Cell>
        <Cell $w={162}><span>At  2.5cm</span><span>Ln  1</span><span>Col  1      </span></Cell>
        <Cell $w={26} $dim>REC</Cell>
        <Cell $w={25} $dim>TRK</Cell>
        <Cell $w={25} $dim>EXT</Cell>
        <Cell $w={25} $dim>OVR</Cell>
        <Cell $w={66}>English (U.S</Cell>
        <Cell $w={42}><Svg w={26} h={14}><g transform="translate(6 0)"><path d="M3.500 2.500c2-1 4-1 6 0 2-1 4-1 6 0v9c-2-1-4-1-6 0-2-1-4-1-6 0zM9.500 3v8" fill="#fff" stroke="#000" /><path d="M1.500 4v9h14" stroke="#000" /><path d="M9 8l2 3 7-10" stroke="#8a1c1c" strokeWidth="2" /></g></Svg></Cell>
        <Cell $w={36} /><Cell $w={28} /><Cell $w={28} />
      </Status>

      <TaskBar>
        <StartButton><Flag />start</StartButton>
        <Task><Gear />ANATA</Task>
        <Task><Fox />SMA Banyumas sing L...</Task>
        <Task $on><WordMark />Document1 - Microsof...</Task>
        <Spacer />
        <Nero>nero<small>@SEARCH</small></Nero>
        <Svg><rect x=".5" y=".5" width="15" height="15" rx="1" fill="#4aa83a" stroke="#b4e0a4" /><path d="M3 8h9M8.500 4.500L12 8l-3.500 3.500" stroke="#fff" strokeWidth="2" /></Svg>
        <PlainButton aria-label="Search options" $w={19}><Down c="#0a2a80" /></PlainButton>
        <PlainButton as="span" $w={8} />
        <Tray>
          <Svg w={16} h={18}><circle cx="8" cy="9" r="7.500" fill="#2a80e4" stroke="#9acaf8" /><path d="M10 5.500L6.500 9l3.500 3.500" stroke="#fff" strokeWidth="2" /></Svg>
          <Network />
          <span>1:54 PM</span>
        </Tray>
      </TaskBar>
    </Shell>
  );
}
